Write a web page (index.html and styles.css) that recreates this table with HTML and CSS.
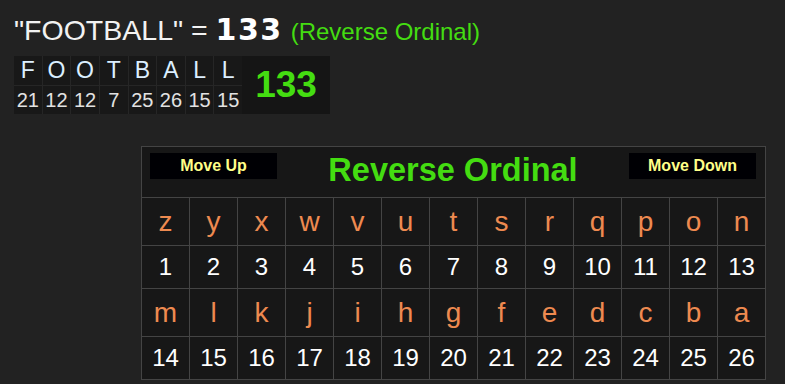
FILE: index.html
```html
<!DOCTYPE html>
<html lang="en">
<head>
<meta charset="utf-8">
<title>FOOTBALL - Reverse Ordinal</title>
<link rel="stylesheet" href="styles.css">
</head>
<body>
<div class="page">
  <h1 class="headline">"FOOTBALL" = <span class="total">133</span> <span class="cipher">(Reverse Ordinal)</span></h1>

  <div class="word">
    <div class="word-grid">
      <div class="wl">F</div><div class="wl">O</div><div class="wl">O</div><div class="wl">T</div><div class="wl">B</div><div class="wl">A</div><div class="wl">L</div><div class="wl">L</div>
      <div class="wn">21</div><div class="wn">12</div><div class="wn">12</div><div class="wn">7</div><div class="wn">25</div><div class="wn">26</div><div class="wn">15</div><div class="wn">15</div>
    </div>
    <div class="word-sum">133</div>
  </div>

  <div class="chart">
    <div class="chart-head">
      <button class="move">Move Up</button>
      <div class="chart-title">Reverse Ordinal</div>
      <button class="move">Move Down</button>
    </div>
    <div class="l">z</div><div class="l">y</div><div class="l">x</div><div class="l">w</div><div class="l">v</div><div class="l">u</div><div class="l">t</div><div class="l">s</div><div class="l">r</div><div class="l">q</div><div class="l">p</div><div class="l">o</div><div class="l">n</div>
    <div class="n">1</div><div class="n">2</div><div class="n">3</div><div class="n">4</div><div class="n">5</div><div class="n">6</div><div class="n">7</div><div class="n">8</div><div class="n">9</div><div class="n">10</div><div class="n">11</div><div class="n">12</div><div class="n">13</div>
    <div class="l">m</div><div class="l">l</div><div class="l">k</div><div class="l">j</div><div class="l">i</div><div class="l">h</div><div class="l">g</div><div class="l">f</div><div class="l">e</div><div class="l">d</div><div class="l">c</div><div class="l">b</div><div class="l">a</div>
    <div class="n">14</div><div class="n">15</div><div class="n">16</div><div class="n">17</div><div class="n">18</div><div class="n">19</div><div class="n">20</div><div class="n">21</div><div class="n">22</div><div class="n">23</div><div class="n">24</div><div class="n">25</div><div class="n">26</div>
  </div>
</div>
</body>
</html>
```

FILE: styles.css
```css
html, body {
  margin: 0;
  padding: 0;
  background: #222222;
}

body {
  font-family: "Liberation Sans", Arial, sans-serif;
  color: #ffffff;
}

.page {
  padding: 14px 0 0 14px;
}

.headline {
  margin: 0;
  height: 32px;
  font-size: 28.5px;
  line-height: 32px;
  font-weight: normal;
  color: #f2f2f2;
  white-space: nowrap;
}

.headline .total {
  font-family: "DejaVu Sans", Verdana, sans-serif;
  font-weight: bold;
  font-size: 30px;
  letter-spacing: 1.5px;
  line-height: 20px;
  color: #ffffff;
}

.headline .cipher {
  font-size: 24px;
  line-height: 20px;
  color: #44dd11;
}

.word {
  display: flex;
  margin-top: 10px;
  width: 316px;
  height: 58px;
  background: #151515;
}

.word-grid {
  display: grid;
  width: 228px;
  grid-template-columns: repeat(8, 1fr);
  grid-template-rows: 29px 28px;
  gap: 1px;
  background: #262626;
}

.wl, .wn {
  background: #181818;
  display: flex;
  align-items: center;
  justify-content: center;
}

.wl {
  font-size: 23px;
  color: #dcefff;
}

.wn {
  font-size: 20px;
  color: #e2e2e2;
}

.word-sum {
  flex: 1;
  display: flex;
  align-items: center;
  justify-content: center;
  font-size: 37px;
  font-weight: bold;
  color: #44dd11;
  background: #151515;
}

.chart {
  display: grid;
  width: 623px;
  margin: 32px 0 0 127px;
  grid-template-columns: repeat(13, 47px);
  grid-template-rows: 50px 47px 42px 47px 42px;
  gap: 1px;
  background: #444444;
  border: 1px solid #444444;
}

.chart-head {
  grid-column: 1 / -1;
  background: #171717;
  display: flex;
  justify-content: space-between;
  align-items: flex-start;
  padding: 6px 9px 0 8px;
}

.move {
  width: 127px;
  height: 26px;
  margin: 0;
  padding: 0;
  border: none;
  background: #000004;
  color: #ffff88;
  font-family: "Liberation Sans", Arial, sans-serif;
  font-size: 16px;
  font-weight: bold;
}

.chart-title {
  font-size: 32.5px;
  font-weight: bold;
  line-height: 34px;
  color: #44dd11;
}

.l, .n {
  background: #171717;
  text-align: center;
}

.l {
  font-size: 28px;
  line-height: 47px;
  color: #ee8a50;
}

.n {
  font-size: 24px;
  line-height: 42px;
  color: #ffffff;
}
```
